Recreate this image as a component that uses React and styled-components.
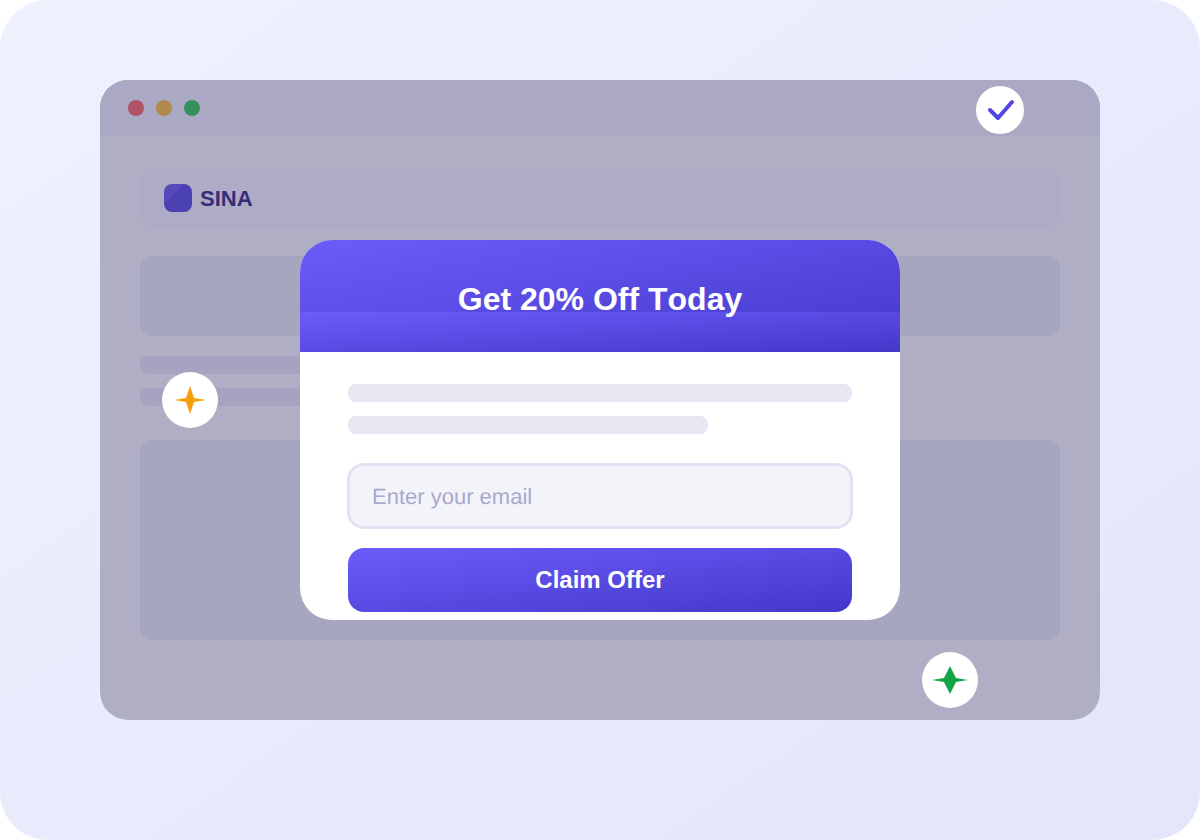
import React from "react";
import styled, { createGlobalStyle } from "styled-components";

const accent = "linear-gradient(to bottom right, #6c5cf9, #4338ca)";

const GlobalStyle = createGlobalStyle`
  *, *::before, *::after { box-sizing: border-box; }
  body {
    margin: 0;
    background: #ffffff;
    font-family: "Liberation Sans", Arial, Helvetica, sans-serif;
  }
`;

const Scene = styled.main`
  min-height: 100vh;
  padding: 80px 100px 120px;
  border-radius: 48px;
  background: linear-gradient(to bottom right, #eef1fd, #e3e6fb);
`;

const BrowserWindow = styled.section`
  position: relative;
  border-radius: 28px;
  overflow: hidden;
  background: #b0aec4;
`;

const TitleBar = styled.div`
  display: flex;
  align-items: center;
  gap: 12px;
  height: 56px;
  padding: 0 28px;
  background: #aba8c4;
`;

const Dot = styled.span`
  width: 16px;
  height: 16px;
  border-radius: 50%;
  background: ${({ $color }) => $color};
`;

const Page = styled.div`
  display: flex;
  flex-direction: column;
  padding: 32px 40px 80px;
`;

const Nav = styled.header`
  display: flex;
  align-items: center;
  gap: 8px;
  height: 60px;
  padding: 0 24px;
  border-radius: 16px;
  background: #aeabc7;
`;

const LogoMark = styled.span`
  width: 28px;
  height: 28px;
  border-radius: 8px;
  background: linear-gradient(to bottom right, #564abb 35%, #4c41b2 35%);
`;

const Brand = styled.span`
  padding-top: 2px;
  font-size: 22px;
  font-weight: 700;
  line-height: 28px;
  color: #362e77;
`;

const Block = styled.div`
  height: ${({ $height }) => $height}px;
  margin-top: ${({ $gap }) => $gap}px;
  border-radius: 12px;
  background: #a6a6c1;
`;

const TextLines = styled.div`
  display: flex;
  flex-direction: column;
  gap: 14px;
  margin-top: ${({ $gap }) => $gap || 0}px;
`;

const Line = styled.div`
  width: ${({ $width }) => $width};
  height: 18px;
  border-radius: 8px;
  background: ${({ $color }) => $color};
`;

const Overlay = styled.div`
  position: absolute;
  inset: 0;
  display: flex;
  align-items: flex-start;
  justify-content: center;
  padding-top: 160px;
`;

const Modal = styled.div`
  width: 100%;
  max-width: 600px;
  border-radius: 32px;
  overflow: hidden;
  background: #ffffff;
`;

const ModalHeader = styled.div`
  display: flex;
  align-items: center;
  justify-content: center;
  height: 112px;
  padding-top: 6px;
  background:
    ${accent} bottom / 100% 40px no-repeat,
    ${accent};
`;

const ModalTitle = styled.h1`
  margin: 0;
  font-size: 32px;
  font-weight: 700;
  line-height: 40px;
  font-kerning: none;
  color: #ffffff;
`;

const OfferForm = styled.form`
  padding: 32px 48px 8px;
`;

const EmailField = styled.label`
  display: block;
  margin: 29px -1px 19px;
`;

const EmailInput = styled.input`
  display: block;
  width: 100%;
  height: 66px;
  padding: 2px 22px 0;
  border: 3px solid #e2e2f4;
  border-radius: 17px;
  background: #f3f4fa;
  font: 400 22px/28px "Liberation Sans", Arial, sans-serif;
  text-rendering: geometricPrecision;
  color: #362e77;

  &::placeholder {
    color: #a9a9ca;
    opacity: 1;
  }
`;

const ClaimButton = styled.button`
  display: block;
  width: 100%;
  height: 64px;
  padding: 0;
  border: 0;
  border-radius: 16px;
  background: ${accent};
  font: 700 24px/28px "Liberation Sans", Arial, sans-serif;
  color: #ffffff;
  cursor: pointer;
`;

const Badge = styled.span`
  position: absolute;
  top: ${({ $top }) => $top || "auto"};
  right: ${({ $right }) => $right || "auto"};
  bottom: ${({ $bottom }) => $bottom || "auto"};
  left: ${({ $left }) => $left || "auto"};
  width: ${({ $size }) => $size}px;
  height: ${({ $size }) => $size}px;
  border-radius: 50%;
  background: #ffffff;

  svg {
    display: block;
    width: 100%;
    height: 100%;
  }
`;

export default function App() {
  return (
    <>
      <GlobalStyle />
      <Scene>
        <BrowserWindow>
          <TitleBar>
            <Dot $color="#b15364" />
            <Dot $color="#b1894d" />
            <Dot $color="#348f5a" />
          </TitleBar>
          <Page>
            <Nav>
              <LogoMark />
              <Brand>SINA</Brand>
            </Nav>
            <Block $height={80} $gap={28} />
            <TextLines $gap={20}>
              <Line $width="60%" $color="#a6a3c1" />
              <Line $width="40%" $color="#a6a3c1" />
            </TextLines>
            <Block $height={200} $gap={34} />
          </Page>
          <Overlay>
            <Modal role="dialog" aria-labelledby="offer-title">
              <ModalHeader>
                <ModalTitle id="offer-title">Get 20% Off Today</ModalTitle>
              </ModalHeader>
              <OfferForm onSubmit={(event) => event.preventDefault()}>
                <TextLines>
                  <Line $width="100%" $color="#e7e7f4" />
                  <Line $width="360px" $color="#e7e7f4" />
                </TextLines>
                <EmailField>
                  <EmailInput type="email" placeholder="Enter your email" aria-label="Enter your email" />
                </EmailField>
                <ClaimButton type="submit">Claim Offer</ClaimButton>
              </OfferForm>
            </Modal>
          </Overlay>
          <Badge $size={48} $top="6px" $right="76px">
            <svg viewBox="0 0 48 48" aria-hidden="true">
              <path d="M14 24l8 8 14-16" fill="none" stroke="#4f46e5" strokeWidth="4" strokeLinecap="round" strokeLinejoin="round" />
            </svg>
          </Badge>
          <Badge $size={56} $top="292px" $left="62px">
            <svg viewBox="0 0 56 56" aria-hidden="true">
              <path d="M28 14l4 12 12 2-12 2-4 12-4-12-12-2 12-2z" fill="#f59e0b" />
            </svg>
          </Badge>
          <Badge $size={56} $bottom="12px" $right="122px">
            <svg viewBox="0 0 56 56" aria-hidden="true">
              <path d="M28 14l6 12 12 2-12 2-6 12-6-12-12-2 12-2z" fill="#16a34a" />
            </svg>
          </Badge>
        </BrowserWindow>
      </Scene>
    </>
  );
}
